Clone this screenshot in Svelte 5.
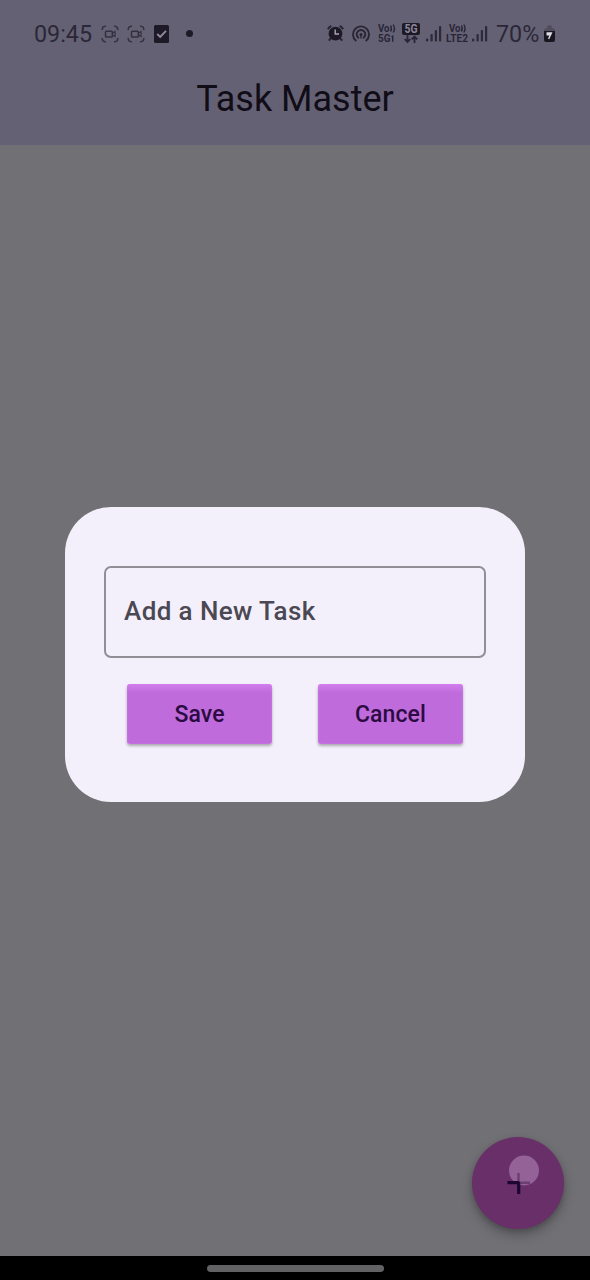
<script>
  const signalBars = [
    { x: 0, h: 3 },
    { x: 4.5, h: 7.5 },
    { x: 8.8, h: 11.5 },
    { x: 13, h: 15.5 }
  ];
</script>

{#snippet capture()}
  <svg class="capture" width="18" height="18" viewBox="0 0 18 18" fill="none" stroke="#34303f" stroke-width="1.500">
    <path d="M.9 5 2 2 5 .9M13 .9l3 1.1L17.1 5M17.1 13 16 16l-3 1.1M5 17.1 2 16 .9 13" />
    <rect x="4.500" y="6.200" width="6.800" height="5.800" rx=".8" />
    <path d="m11.500 8 2.500-1.500v5L11.500 10" stroke-width="1.200" />
  </svg>
{/snippet}

{#snippet signal()}
  <svg class="signal" width="16" height="17" viewBox="0 0 16 17" fill="#2d293a">
    {#each signalBars as bar}
      <rect x={bar.x} y={16.5 - bar.h} width="2.200" height={bar.h} rx=".8" />
    {/each}
  </svg>
{/snippet}

<div class="screen">
  <header>
    <div class="status">
      <div class="left">
        <span class="time">09:45</span>
        {@render capture()}
        {@render capture()}
        <svg class="check" width="15" height="18" viewBox="0 0 15 18">
          <rect width="15" height="18" rx="1.500" fill="#1d1926" />
          <path d="m3.200 9 3 3 5.800-6.200" fill="none" stroke="#8f8a9d" stroke-width="1.900" />
        </svg>
        <span class="dot"></span>
      </div>
      <div class="right">
        <svg class="alarm" width="17" height="17" viewBox="0 0 17 17">
          <path d="M.9 4.300Q2 2 4.300.9M12.700.9Q15 2 16.100 4.300M4 13l-2.200 2.700M13 13l2.200 2.700" fill="none" stroke="#292536" stroke-width="2" />
          <circle cx="8.500" cy="8.700" r="6.900" fill="#1d1926" />
          <path d="M8.200 4.500V9H12" fill="none" stroke="#aaa5b5" stroke-width="1.400" />
        </svg>
        <svg class="hotspot" width="20" height="18" viewBox="0 0 20 18" fill="none" stroke="#292536" stroke-width="1.900" stroke-linecap="round">
          <path d="M4.800 15.500A8 8 0 1 1 15.200 15.500M7.400 12.700a4.300 4.300 0 1 1 5.200 0" />
          <circle cx="10" cy="9.600" r="1.600" fill="#292536" stroke="none" />
          <path d="M10 10.500v2.500" stroke-width="1.300" />
        </svg>
        <svg class="carrier" width="20" height="25" viewBox="0 -3 20 25">
          <text x="0" y="8" textLength="11.500" lengthAdjust="spacingAndGlyphs">Vo</text>
          <path d="M12.600 1.500q1.700 3 0 6M15.200 .5q2.500 4 0 8" />
          <text x="0" y="17.800" textLength="12.500" lengthAdjust="spacingAndGlyphs">5G</text>
          <path d="m13.500 13 1.200-.9v5.700" />
        </svg>
        <svg class="network" width="18" height="21" viewBox="0 0 18 21">
          <rect width="18" height="12" rx="2" fill="#1d1926" />
          <text x="2.500" y="10.200" textLength="13" lengthAdjust="spacingAndGlyphs">5G</text>
          <path d="M5.500 12v7M2.700 16.200l2.800 2.800 2.800-2.800M12.500 20v-6.300M9.700 16.300l2.800-2.800 2.800 2.800" fill="none" stroke="#292536" stroke-width="1.800" />
        </svg>
        {@render signal()}
        <svg class="carrier lte" width="22" height="25" viewBox="0 -3 22 25">
          <text x="3" y="8" textLength="11.500" lengthAdjust="spacingAndGlyphs">Vo</text>
          <path d="M15.400 1.500q1.700 3 0 6M17.800 .5q2.500 4 0 8" />
          <text x="0" y="17.800" textLength="22" lengthAdjust="spacingAndGlyphs">LTE2</text>
        </svg>
        {@render signal()}
        <span class="percent">70%</span>
        <svg class="battery" width="13" height="18" viewBox="0 0 13 18">
          <path d="M4 1q2.500-1.500 5 0v2q3 0 3 3H1q0-3 3-3z" fill="#514c5e" />
          <path d="M1 6h11v9q0 2-2 2H3q-2 0-2-2z" fill="#191620" />
          <path d="M3.500 7.200h6L6.200 14.200 5 13.600 6.400 10.600H3.500z" fill="#dedbe5" />
        </svg>
      </div>
    </div>
    <h1>Task Master</h1>
  </header>

  <main>
    <section class="dialog">
      <div class="field">Add a New Task</div>
      <div class="actions">
        <button>Save</button>
        <button>Cancel</button>
      </div>
    </section>
    <button class="fab" aria-label="Add">
      <svg width="92" height="92" viewBox="0 0 92 92">
        <path d="M46.500 35v21M35.500 45.700H58" fill="none" stroke="#4a2451" stroke-width="2.600" />
        <circle cx="52" cy="33.500" r="15" fill="#946297" />
        <path d="M46.500 36v10M46.500 45.700H58" fill="none" stroke="#532d60" stroke-opacity=".65" stroke-width="2.400" />
        <path d="M35.500 45.700h10q1.200 0 1.200 1.200v10" fill="none" stroke="#1d0632" stroke-width="3.200" />
      </svg>
    </button>
  </main>
  <footer><span></span></footer>
</div>

<style>
  :global(body) { margin: 0; }
  * { box-sizing: border-box; }
  .screen {
    width: 590px;
    height: 1280px;
    display: flex;
    flex-direction: column;
    overflow: hidden;
    background: #717075;
    font-family: Roboto, sans-serif;
  }
  header {
    height: 145px;
    background: #656174;
  }
  .status {
    height: 67px;
    padding: 0 34px;
    display: flex;
    justify-content: space-between;
    align-items: center;
    color: #2b2738;
  }
  .left, .right { display: flex; align-items: center; }
  svg { display: block; flex: none; }
  .time, .percent {
    font-size: 23.300px;
    line-height: 28px;
    white-space: nowrap;
  }
  .time { width: 67px; }
  .capture { margin-right: 8px; }
  .check { margin-left: 1px; }
  .dot { width: 7px; height: 7px; margin-left: 17px; border-radius: 50%; background: #1d1926; }
  .alarm { margin-right: 7px; }
  .hotspot { margin-right: 7px; }
  .carrier { margin-right: 4px; }
  .carrier text { font: 700 10px Roboto, sans-serif; fill: #292536; }
  .carrier path { fill: none; stroke: #292536; stroke-width: 1.400; }
  .network { margin-right: 6px; }
  .network text { font: 700 12px Roboto, sans-serif; fill: #8b8699; }
  .signal { margin-right: 4px; }
  .percent { width: 47px; margin-left: 4px; }
  h1 {
    margin: 10px 0 0;
    text-align: center;
    font-size: 36px;
    line-height: 44px;
    font-weight: 400;
    color: #100d17;
  }
  main {
    flex: 1;
    display: flex;
    flex-direction: column;
    align-items: center;
    padding-top: 362px;
  }
  .dialog {
    width: 460px;
    height: 295px;
    padding: 59px 39px 0;
    border-radius: 46px;
    background: #f4f0fb;
  }
  .field {
    height: 92px;
    padding: 0 18px 2px;
    display: flex;
    align-items: center;
    border: 2px solid #918e96;
    border-radius: 7px;
    font-size: 26px;
    letter-spacing: .4px;
    font-weight: 500;
    color: #4b4853;
  }
  .actions {
    margin-top: 26px;
    display: flex;
    justify-content: center;
    gap: 46px;
  }
  .actions button {
    width: 145px;
    height: 60px;
    padding: 1px 0 0;
    border: 0;
    border-radius: 3px;
    background: linear-gradient(#d27ded 0, #c773e3 5px, #bf6bdc 9px);
    box-shadow: 0 2px 3px rgb(0 0 0 / 30%), inset 0 0 2px #d482ef;
    font: 500 23px/59px Roboto, sans-serif;
    letter-spacing: .1px;
    color: #2c0b43;
  }
  .fab {
    width: 92px;
    height: 92px;
    margin: 335px 26px 0 auto;
    padding: 0;
    border: 0;
    border-radius: 50%;
    background: #692f68;
    box-shadow: 0 6px 12px rgb(0 0 0 / 25%), 0 2px 5px rgb(0 0 0 / 15%);
  }
  footer {
    height: 24px;
    padding-top: 1px;
    display: flex;
    justify-content: center;
    align-items: center;
    background: #000;
  }
  footer span { width: 177px; height: 7px; border-radius: 4px; background: #626164; }
</style>
